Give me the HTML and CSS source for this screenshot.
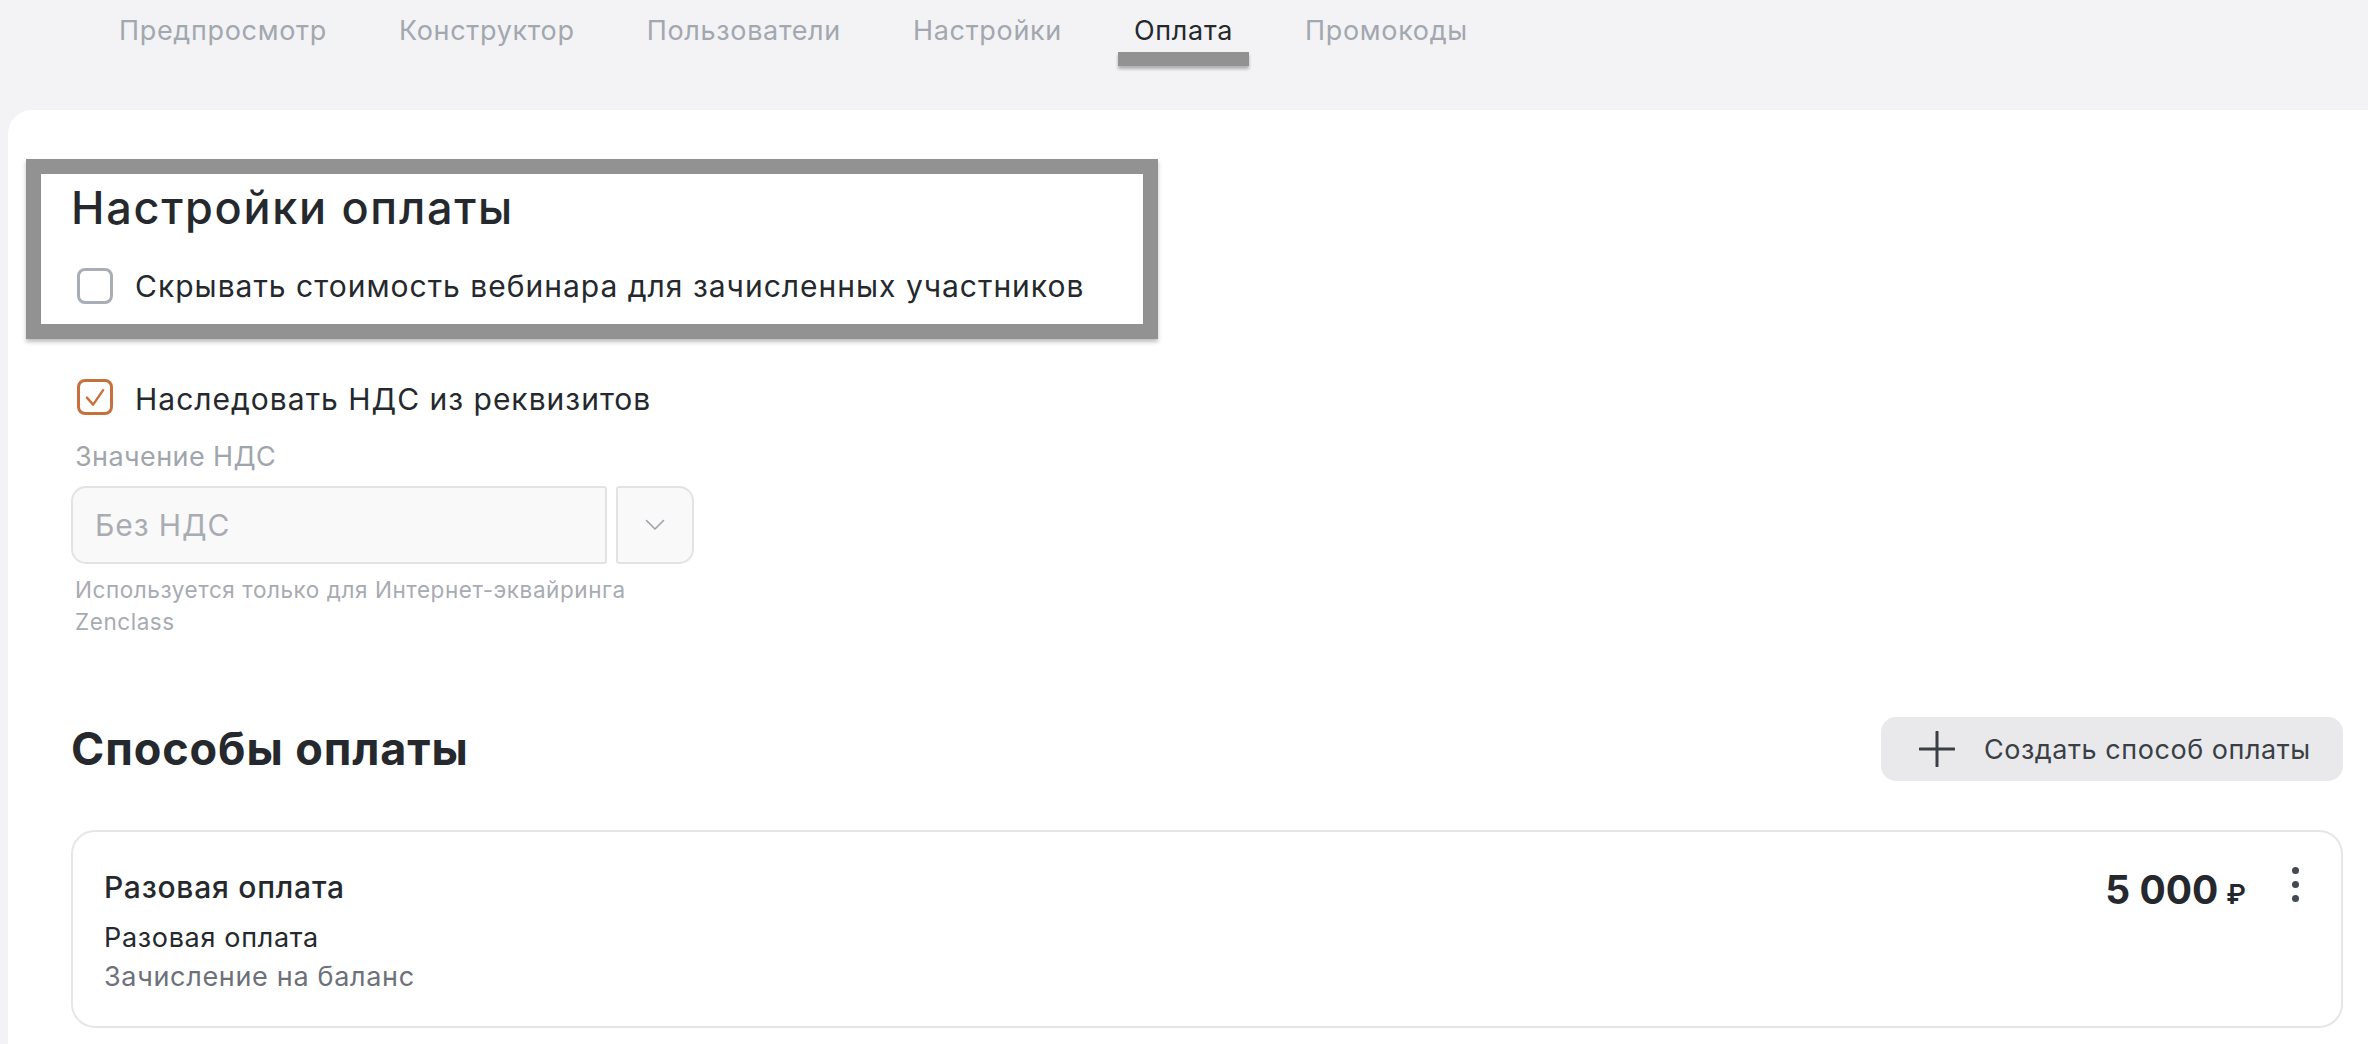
FILE: index.html
```html
<!DOCTYPE html>
<html lang="ru">
<head>
<meta charset="utf-8">
<title>Оплата</title>
<link rel="stylesheet" href="styles.css">
</head>
<body>
<nav class="tabs">
  <a class="tab">Предпросмотр</a>
  <a class="tab">Конструктор</a>
  <a class="tab">Пользователи</a>
  <a class="tab">Настройки</a>
  <a class="tab tab--active">Оплата</a>
  <a class="tab">Промокоды</a>
</nav>

<main class="panel">
  <section class="settings">
    <div class="settings__focus">
      <h1 class="settings__title">Настройки оплаты</h1>
      <label class="check check--first">
        <span class="check__box"></span>
        <span class="check__text">Скрывать стоимость вебинара для зачисленных участников</span>
      </label>
    </div>

    <label class="check check--vat">
      <span class="check__box check__box--on">
        <svg viewBox="0 0 24 24" width="32" height="32"><path d="M5.5 12.5l5 5.6L18.5 6.5" fill="none" stroke="#c8703c" stroke-width="1.9" stroke-linecap="round" stroke-linejoin="round"/></svg>
      </span>
      <span class="check__text">Наследовать НДС из реквизитов</span>
    </label>

    <div class="field">
      <div class="field__label">Значение НДС</div>
      <div class="field__control">
        <div class="field__input">Без НДС</div>
        <button class="field__toggle" type="button">
          <svg viewBox="0 0 20 12" width="20" height="12"><path d="M1.5 1.5l8.5 8.5 8.5-8.5" fill="none" stroke="#9ea2aa" stroke-width="1.6" stroke-linecap="round" stroke-linejoin="round"/></svg>
        </button>
      </div>
      <div class="field__hint">Используется только для Интернет-эквайринга Zenclass</div>
    </div>
  </section>

  <section class="methods">
    <div class="methods__head">
      <h2 class="methods__title">Способы оплаты</h2>
      <button class="btn-create" type="button">
        <svg viewBox="0 0 36 36" width="36" height="36"><path d="M18 1v34M1 18h34" stroke="#3a3f45" stroke-width="3" stroke-linecap="round"/></svg>
        <span>Создать способ оплаты</span>
      </button>
    </div>

    <article class="method">
      <div class="method__info">
        <div class="method__name">Разовая оплата</div>
        <div class="method__type">Разовая оплата</div>
        <div class="method__note">Зачисление на баланс</div>
      </div>
      <div class="method__side">
        <div class="method__price">5 000<span class="method__cur">₽</span></div>
        <button class="kebab" type="button"><span></span><span></span><span></span></button>
      </div>
    </article>
  </section>
</main>
</body>
</html>
```

FILE: styles.css
```css
*,
*::before,
*::after {
  box-sizing: border-box;
}

body {
  margin: 0;
  background: #f3f3f5;
  font-family: Inter, "Noto Sans", sans-serif;
  color: #262a30;
  overflow: hidden;
}

/* top tab bar */
.tabs {
  display: flex;
  gap: 72px;
  height: 110px;
  padding: 13px 0 0 119px;
}

.tab {
  position: relative;
  font-size: 27px;
  line-height: 36px;
  letter-spacing: 0.025em;
  color: #a3a7af;
  white-space: nowrap;
}

.tab--active {
  color: #25292e;
}

.tab--active::after {
  content: "";
  position: absolute;
  left: -16px;
  right: -16px;
  top: 39px;
  height: 14px;
  background: #929292;
  box-shadow: 0 3px 3px rgba(0, 0, 0, 0.28);
}

/* white content panel */
.panel {
  margin-left: 8px;
  min-height: calc(100vh - 110px);
  padding: 77px 25px 40px 63px;
  background: #fff;
  border-top-left-radius: 24px;
}

/* payment settings */
.settings__focus {
  position: relative;
}

.settings__focus::before {
  content: "";
  position: absolute;
  top: -28px;
  left: -45px;
  width: 1132px;
  height: 180px;
  border: 15px solid #929292;
  box-shadow: 0 3px 4px rgba(0, 0, 0, 0.25);
  pointer-events: none;
}

.settings__title {
  margin: 0;
  font-size: 45px;
  line-height: 42px;
  font-weight: 500;
  letter-spacing: 0.038em;
  color: #25292e;
}

.check {
  display: flex;
  align-items: center;
  gap: 22px;
  height: 36px;
  padding-left: 6px;
}

.check--first {
  margin-top: 39px;
}

.check--vat {
  margin-top: 75px;
}

.check__box {
  flex: none;
  display: flex;
  align-items: center;
  justify-content: center;
  width: 36px;
  height: 36px;
  border: 3px solid #a9aeb6;
  border-radius: 8px;
  background: #fff;
}

.check__box--on {
  border-color: #c8703c;
}

.check__text {
  font-size: 30px;
  line-height: 36px;
  letter-spacing: 1px;
  color: #25292e;
  white-space: nowrap;
}

.check--vat .check__text {
  padding-top: 3px;
}

/* VAT select */
.field {
  width: 623px;
  margin-top: 24px;
}

.field__label {
  padding-left: 4px;
  font-size: 27px;
  line-height: 36px;
  letter-spacing: 0.015em;
  color: #a1a5ad;
}

.field__control {
  display: flex;
  gap: 9px;
  height: 78px;
  margin-top: 11px;
}

.field__input {
  flex: 1;
  display: flex;
  align-items: center;
  padding-left: 22px;
  border: 2px solid #e3e3e5;
  border-radius: 15px 3px 3px 15px;
  background: #f9f9fa;
  font-size: 30px;
  letter-spacing: 0.03em;
  color: #a9acb3;
}

.field__toggle {
  flex: none;
  display: flex;
  align-items: center;
  justify-content: center;
  width: 78px;
  padding: 0;
  border: 2px solid #e3e3e5;
  border-radius: 3px 15px 15px 3px;
  background: #f9f9fa;
}

.field__hint {
  margin-top: 10px;
  padding-left: 4px;
  font-size: 22.5px;
  line-height: 32px;
  letter-spacing: 0.025em;
  color: #a8abb2;
}

/* payment methods */
.methods {
  margin-top: 79px;
}

.methods__head {
  display: flex;
  align-items: center;
  justify-content: space-between;
  height: 64px;
}

.methods__title {
  margin: 0;
  font-size: 45px;
  line-height: 54px;
  font-weight: 700;
  letter-spacing: 0.02em;
  color: #25292e;
}

.btn-create {
  display: flex;
  align-items: center;
  gap: 29px;
  width: 462px;
  height: 64px;
  padding: 0 0 0 38px;
  border: 0;
  border-radius: 15px;
  background: #e9e9ec;
  font-family: inherit;
  font-size: 27px;
  letter-spacing: 0.02em;
  color: #3a3f45;
}

.btn-create svg {
  flex: none;
}

.method {
  display: flex;
  align-items: flex-start;
  justify-content: space-between;
  margin-top: 49px;
  padding: 37px 34px 31px 31px;
  border: 2px solid #e6e6e8;
  border-radius: 24px;
}

.method__name {
  font-size: 30px;
  line-height: 36px;
  font-weight: 500;
  letter-spacing: 0.025em;
  color: #25292e;
}

.method__type {
  margin-top: 15px;
  font-size: 27px;
  line-height: 36px;
  letter-spacing: 0.025em;
  color: #25292e;
}

.method__note {
  margin-top: 3px;
  font-size: 27px;
  line-height: 36px;
  letter-spacing: 0.025em;
  color: #6c717a;
}

.method__side {
  display: flex;
  align-items: flex-start;
  gap: 37px;
  margin-top: -3px;
}

.method__price {
  font-size: 39px;
  line-height: 48px;
  font-weight: 700;
  color: #25292e;
  white-space: nowrap;
}

.method__cur {
  margin-left: 8px;
  font-size: 27px;
  font-weight: 600;
}

.kebab {
  display: flex;
  flex-direction: column;
  align-items: center;
  justify-content: space-between;
  width: 24px;
  height: 35px;
  margin-top: 1px;
  padding: 0;
  border: 0;
  background: none;
}

.kebab span {
  width: 7px;
  height: 7px;
  border-radius: 50%;
  background: #454a50;
}
```
